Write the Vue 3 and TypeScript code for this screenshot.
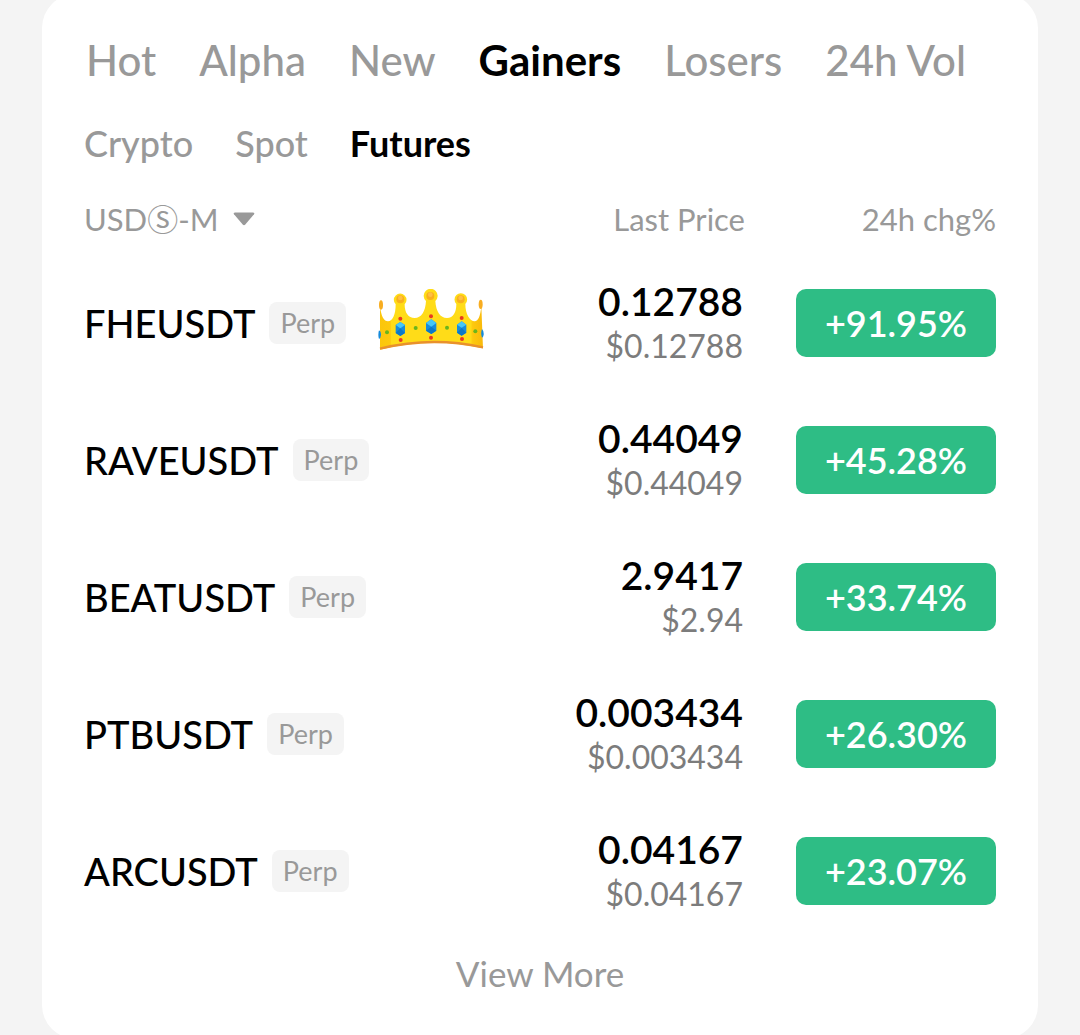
<script setup lang="ts">
import { ref } from 'vue'

interface Market {
  symbol: string
  price: string
  usd: string
  change: string
  top?: boolean
}

const tabs: string[] = ['Hot', 'Alpha', 'New', 'Gainers', 'Losers', '24h Vol']
const activeTab = ref<string>('Gainers')

const segments: string[] = ['Crypto', 'Spot', 'Futures']
const activeSegment = ref<string>('Futures')

const contract = ref<string>('USDⓈ-M')

const markets: Market[] = [
  { symbol: 'FHEUSDT', price: '0.12788', usd: '$0.12788', change: '+91.95%', top: true },
  { symbol: 'RAVEUSDT', price: '0.44049', usd: '$0.44049', change: '+45.28%' },
  { symbol: 'BEATUSDT', price: '2.9417', usd: '$2.94', change: '+33.74%' },
  { symbol: 'PTBUSDT', price: '0.003434', usd: '$0.003434', change: '+26.30%' },
  { symbol: 'ARCUSDT', price: '0.04167', usd: '$0.04167', change: '+23.07%' },
]
</script>

<template>
  <main class="page">
    <section class="card">
      <nav class="tabs">
        <button
          v-for="tab in tabs"
          :key="tab"
          type="button"
          class="tab"
          :class="{ active: tab === activeTab }"
          @click="activeTab = tab"
        >{{ tab }}</button>
      </nav>

      <nav class="segments">
        <button
          v-for="segment in segments"
          :key="segment"
          type="button"
          class="segment"
          :class="{ active: segment === activeSegment }"
          @click="activeSegment = segment"
        >{{ segment }}</button>
      </nav>

      <table class="markets">
        <thead>
          <tr>
            <th class="col-name" scope="col">
              <label class="contract">
                <select v-model="contract" class="contract-select" aria-label="Contract type">
                  <option value="USDⓈ-M">USDⓈ-M</option>
                </select>
                <svg class="caret" viewBox="0 0 22 14" aria-hidden="true">
                  <path d="M2 0.500H20Q22 0.500 21 2.200L12.300 12.600Q11 14 9.700 12.600L1 2.200Q0 0.500 2 0.500Z" />
                </svg>
              </label>
            </th>
            <th class="col-price" scope="col">Last Price</th>
            <th class="col-change" scope="col">24h chg%</th>
          </tr>
        </thead>
        <tbody>
          <tr v-for="market in markets" :key="market.symbol">
            <td>
              <div class="name">
                <span class="symbol">{{ market.symbol }}</span>
                <span class="tag">Perp</span>
                <svg v-if="market.top" class="crown" viewBox="54 40 318 186" aria-hidden="true">
                  <defs>
                    <linearGradient id="gold" x1="0" x2="1" y1="0" y2="0">
                      <stop offset="0" stop-color="#fbc60c" />
                      <stop offset="0.100" stop-color="#fdc90e" />
                      <stop offset="0.110" stop-color="#ffdc18" />
                      <stop offset="0.880" stop-color="#ffdc18" />
                      <stop offset="0.900" stop-color="#fdc90e" />
                      <stop offset="1" stop-color="#f9b90a" />
                    </linearGradient>
                  </defs>
                  <path fill="url(#gold)" d="M60 92C64 124 72 137 84 137C98 137 107 116 107 86A19 19 0 1 1 134 86C134 112 145 127 164 127C184 127 196 108 198 76A21 21 0 1 1 226 76C228 108 241 127 261 127C280 127 289 110 289 85A19 19 0 1 1 316 85C316 116 330 137 344 137C355 137 361 121 364 92L369 218Q214 182 60 222Z" />
                  <path fill="none" stroke="#e9912c" stroke-width="7" d="M60 219Q214 181 369 215" />
                  <ellipse cx="63" cy="88" rx="6" ry="14" fill="#f8ad20" />
                  <ellipse cx="362" cy="86" rx="6" ry="14" fill="#f8ad20" />
                  <g fill="#f9b01c">
                    <circle cx="121" cy="71" r="12" />
                    <circle cx="211" cy="61" r="12" />
                    <circle cx="302" cy="71" r="12" />
                  </g>
                  <g fill="#ffbf45">
                    <circle cx="121" cy="67" r="7" />
                    <circle cx="211" cy="57" r="7" />
                    <circle cx="302" cy="67" r="7" />
                  </g>
                  <g fill="#168bdc">
                    <path d="M121 139L135 148V172L121 181L107 172V148Z" />
                    <path d="M214 131L229 142V165L214 175L198 165V142Z" />
                    <path d="M305 137L319 147V171L305 180L291 171V147Z" />
                    <path d="M57 164Q64 168 63 178Q62 188 57 190Q53 177 57 164ZM366 160Q372 166 371 177Q370 184 366 186Q361 173 366 160Z" />
                  </g>
                  <g fill="#45c7f7">
                    <path d="M121 139L135 148L121 158L107 148Z" />
                    <path d="M214 131L229 142L214 153L198 142Z" />
                    <path d="M305 137L319 147L305 156L291 147Z" />
                  </g>
                  <g fill="#0b78c8">
                    <path d="M121 158L135 172L121 181L107 172Z" />
                    <path d="M214 153L229 165L214 175L198 165Z" />
                    <path d="M305 156L319 171L305 180L291 171Z" />
                  </g>
                  <g fill="#e83a20">
                    <circle cx="121" cy="129" r="6" />
                    <circle cx="122" cy="193" r="6" />
                    <circle cx="213" cy="122" r="6" />
                    <circle cx="213" cy="186" r="6" />
                    <circle cx="305" cy="127" r="6" />
                    <circle cx="306" cy="190" r="6" />
                  </g>
                  <g fill="#69b51d">
                    <circle cx="81" cy="170" r="6" />
                    <circle cx="167" cy="157" r="6" />
                    <circle cx="261" cy="156" r="6" />
                    <circle cx="346" cy="167" r="6" />
                  </g>
                </svg>
              </div>
            </td>
            <td class="prices">
              <div class="price">{{ market.price }}</div>
              <div class="usd">{{ market.usd }}</div>
            </td>
            <td>
              <div class="change">{{ market.change }}</div>
            </td>
          </tr>
        </tbody>
      </table>

      <a class="more" href="#">View More</a>
    </section>
  </main>
</template>

<style>
body {
  background: #f4f4f4;
}
</style>

<style scoped>
.page {
  overflow: hidden;
  font-family: Lato, "Noto Sans CJK SC", sans-serif;
  color: #000;
}

.card {
  display: flex;
  flex-direction: column;
  margin: -6px 42px -2px;
  padding: 42px 42px 44px;
  border-radius: 34px;
  background: #fff;
}

button {
  padding: 0;
  border: 0;
  background: none;
  font-family: inherit;
  white-space: nowrap;
  color: #999;
  cursor: pointer;
}

.tabs {
  display: flex;
  gap: 43px;
  padding-left: 2px;
}

.tab {
  font-size: 42px;
  line-height: 48px;
  font-weight: 500;
}

.segments {
  display: flex;
  gap: 42px;
  margin-top: 37px;
}

.segment {
  font-size: 36px;
  line-height: 44px;
  font-weight: 500;
}

.tab.active,
.segment.active {
  font-weight: 700;
  color: #000;
}

.markets {
  width: 100%;
  margin-top: 32px;
  border-collapse: collapse;
  table-layout: fixed;
}

th {
  height: 44px;
  padding: 0 0 13px;
  font-size: 31px;
  line-height: 44px;
  font-weight: 400;
  text-align: right;
  white-space: nowrap;
  color: #999;
}

.col-name {
  text-align: left;
}

.col-price {
  width: 200px;
  padding-right: 51px;
}

.col-change {
  width: 200px;
}

.contract {
  display: flex;
  align-items: center;
  gap: 14px;
}

.contract-select {
  padding: 0;
  border: 0;
  appearance: none;
  background: none;
  font-family: inherit;
  font-size: 31px;
  line-height: 44px;
  color: inherit;
}

.caret {
  width: 22px;
  height: 14px;
  fill: #999;
}

td {
  height: 137px;
  padding: 0;
}

.name {
  display: flex;
  align-items: center;
}

.symbol {
  font-size: 38px;
  line-height: 44px;
  font-weight: 500;
}

.tag {
  margin-left: 14px;
  padding: 0 11px;
  border-radius: 8px;
  background: #f4f4f4;
  font-size: 27px;
  line-height: 42px;
  color: #999;
}

.crown {
  width: 106px;
  height: 62px;
  margin: -6px 0 0 32px;
}

.prices {
  padding-right: 53px;
  text-align: right;
}

.price {
  font-size: 39px;
  line-height: 46px;
  font-weight: 600;
}

.usd {
  font-size: 32px;
  line-height: 44px;
  color: #7c7c7c;
}

.change {
  border-radius: 10px;
  background: #2ebd85;
  font-size: 36px;
  line-height: 68px;
  font-weight: 600;
  text-align: center;
  color: #fff;
}

.more {
  align-self: center;
  margin-top: 12px;
  font-size: 35px;
  line-height: 44px;
  color: #999;
  text-decoration: none;
}
</style>
